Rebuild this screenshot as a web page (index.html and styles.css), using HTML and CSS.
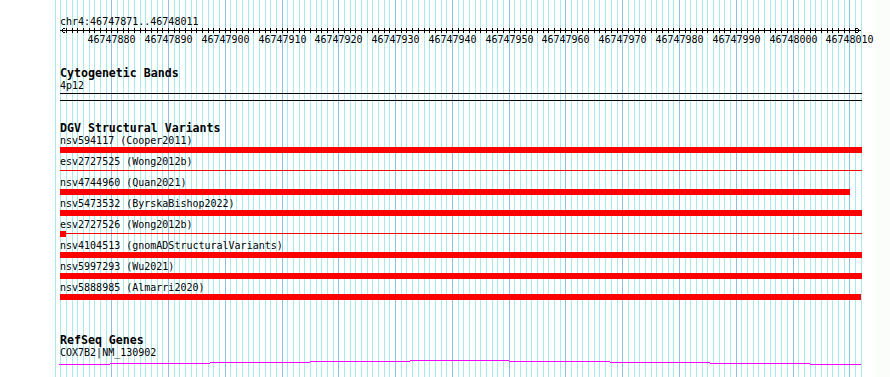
FILE: index.html
```html
<!DOCTYPE html>
<html lang="en">
<head>
	<meta charset="UTF-8">
	<title>chr4:46747871..46748011</title>
	<link rel="stylesheet" href="styles.css">
	<script>
		window.onload=function () {
			var ns="http://www.w3.org/2000/svg";
			var grid=document.getElementById("grid");
			var ruler=document.getElementById("ruler");
			var bp=5.677;	//pixels per base

			for (var k = 0; k <= 142; k++) {
				var x=Math.round(54.5+k*bp)+0.5;
				var line=document.createElementNS(ns,"line");
				line.setAttribute("x1",x);
				line.setAttribute("x2",x);
				line.setAttribute("y1",0);
				line.setAttribute("y2",377);
				line.setAttribute("class",(k%10==0 && k>0) ? "major" : "minor");
				grid.appendChild(line);

				if (k>=2 && k<=141) {
					var tick=document.createElementNS(ns,"line");
					tick.setAttribute("x1",x);
					tick.setAttribute("x2",x);
					tick.setAttribute("y1",0);
					tick.setAttribute("y2",5);
					ruler.appendChild(tick);
				}
			}
		}
	</script>
</head>
<body>
	<div class="browser">
		<svg class="grid" id="grid" width="875" height="377"></svg>

		<div class="locus">chr4:46747871..46748011</div>

		<div class="ruler">
			<svg class="ruler-axis" id="ruler" width="875" height="6">
				<line x1="61" y1="2.5" x2="860" y2="2.5"></line>
				<path d="M64.5 0 L61 2.5 L64.5 5"></path>
				<path d="M856.5 0 L860 2.5 L856.5 5"></path>
			</svg>
			<span class="scale" style="left:111.5px">46747880</span>
			<span class="scale" style="left:168.5px">46747890</span>
			<span class="scale" style="left:225.5px">46747900</span>
			<span class="scale" style="left:282.5px">46747910</span>
			<span class="scale" style="left:338.5px">46747920</span>
			<span class="scale" style="left:395.5px">46747930</span>
			<span class="scale" style="left:452.5px">46747940</span>
			<span class="scale" style="left:509.5px">46747950</span>
			<span class="scale" style="left:565.5px">46747960</span>
			<span class="scale" style="left:622.5px">46747970</span>
			<span class="scale" style="left:679.5px">46747980</span>
			<span class="scale" style="left:736.5px">46747990</span>
			<span class="scale" style="left:793.5px">46748000</span>
			<span class="scale" style="left:849.5px">46748010</span>
		</div>

		<div class="track track-cyto">
			<div class="track-title">Cytogenetic Bands</div>
			<div class="feat-label">4p12</div>
			<div class="band"></div>
		</div>

		<div class="track track-dgv">
			<div class="track-title">DGV Structural Variants</div>
			<div class="sv">
				<div class="feat-label">nsv594117 (Cooper2011)</div>
				<div class="sv-bar" style="width:802px"></div>
			</div>
			<div class="sv">
				<div class="feat-label">esv2727525 (Wong2012b)</div>
				<div class="sv-bar thin" style="width:802px"></div>
			</div>
			<div class="sv">
				<div class="feat-label">nsv4744960 (Quan2021)</div>
				<div class="sv-bar" style="width:790px"></div>
			</div>
			<div class="sv">
				<div class="feat-label">nsv5473532 (ByrskaBishop2022)</div>
				<div class="sv-bar" style="width:802px"></div>
			</div>
			<div class="sv">
				<div class="feat-label">esv2727526 (Wong2012b)</div>
				<div class="sv-bar thin" style="width:802px"><span class="sv-block"></span></div>
			</div>
			<div class="sv">
				<div class="feat-label">nsv4104513 (gnomADStructuralVariants)</div>
				<div class="sv-bar" style="width:802px"></div>
			</div>
			<div class="sv">
				<div class="feat-label">nsv5997293 (Wu2021)</div>
				<div class="sv-bar" style="width:802px"></div>
			</div>
			<div class="sv">
				<div class="feat-label">nsv5888985 (Almarri2020)</div>
				<div class="sv-bar" style="width:801px"></div>
			</div>
		</div>

		<div class="track track-genes">
			<div class="track-title">RefSeq Genes</div>
			<div class="feat-label">COX7B2|NM_130902</div>
			<svg class="gene" width="803" height="8">
				<line x1="0" y1="5.5" x2="51" y2="5.5"></line>
				<line x1="51" y1="4.5" x2="151" y2="4.5"></line>
				<line x1="151" y1="3.5" x2="251" y2="3.5"></line>
				<line x1="251" y1="2.5" x2="351" y2="2.5"></line>
				<line x1="351" y1="1.5" x2="450" y2="1.5"></line>
				<line x1="450" y1="2.5" x2="551" y2="2.5"></line>
				<line x1="551" y1="3.5" x2="651" y2="3.5"></line>
				<line x1="651" y1="4.5" x2="751" y2="4.5"></line>
				<line x1="751" y1="5.5" x2="802" y2="5.5"></line>
			</svg>
		</div>
	</div>
</body>
</html>
```
FILE: styles.css
```css
*{
	margin: 0;
	padding: 0;
}
body {
	background: #fbfdfb;
}
.browser {
	position: relative;
	width: 875px;
	height: 377px;
	padding-top: 15px;
	box-sizing: border-box;
	overflow: hidden;
	background: #fff;
	color: #000;
	font-family: "DejaVu Sans Mono", "Liberation Mono", monospace;
	font-size: 10px;
	line-height: 13px;
}
.grid {
	position: absolute;
	top: 0;
	left: 0;
	z-index: 0;
	shape-rendering: crispEdges;
}
.grid .minor {
	stroke: #a8eaee;
	stroke-width: 1;
}
.grid .major {
	stroke: #88c2e6;
	stroke-width: 1;
}
.locus,
.ruler,
.track {
	position: relative;
	z-index: 1;
}
.locus {
	margin-left: 60px;
	white-space: pre;
}
.ruler {
	height: 20px;
}
.ruler-axis {
	display: block;
	shape-rendering: crispEdges;
}
.ruler-axis line,
.ruler-axis path {
	stroke: #000;
	stroke-width: 1;
	fill: none;
}
.scale {
	position: absolute;
	top: 5px;
	transform: translateX(-50%);
	white-space: pre;
}
.track {
	margin-left: 60px;
}
.track-title {
	font-weight: bold;
	font-size: 11.6px;
	line-height: 11px;
	white-space: pre;
}
.feat-label {
	white-space: pre;
}
.track-cyto {
	margin-top: 20px;
}
.band {
	width: 802px;
	height: 6px;
	margin-top: 1px;
	border-top: 1px solid #000;
	border-bottom: 1px solid #000;
}
.track-dgv {
	margin-top: 22px;
}
.sv {
	margin-bottom: 2px;
}
.sv-bar {
	height: 6px;
	background: #ff0000;
}
.sv-bar.thin {
	background: linear-gradient(#ff0000, #ff0000) no-repeat 0 2px / 100% 1px;
}
.sv-block {
	display: block;
	width: 6px;
	height: 6px;
	background: #ff0000;
}
.track-genes {
	margin-top: 35px;
}
.gene {
	display: block;
	margin-left: -1px;
	shape-rendering: crispEdges;
}
.gene line {
	stroke: #ff00ff;
	stroke-width: 1;
}
```
